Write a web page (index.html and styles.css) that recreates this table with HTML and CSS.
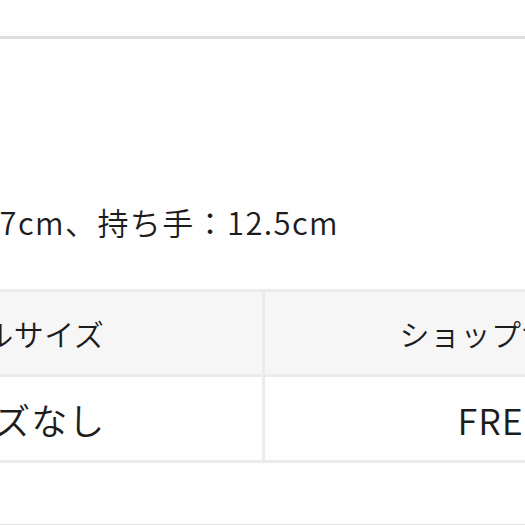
FILE: index.html
```html
<!DOCTYPE html>
<html lang="ja">
<head>
<meta charset="utf-8">
<link rel="stylesheet" href="styles.css">
</head>
<body>
<div class="page">
  <div class="rule-top"></div>
  <div class="spec"><span class="spec-text">マチ：7cm、持ち手：12.5cm</span></div>
  <div class="sheet">
    <table class="size-table">
      <tr class="head">
        <th class="col-a">モデルサイズ</th>
        <th class="col-b">ショップサイズ</th>
      </tr>
      <tr class="body">
        <td class="col-a">サイズなし</td>
        <td class="col-b">FREE</td>
      </tr>
    </table>
  </div>
  <div class="rule-bottom"></div>
</div>
</body>
</html>
```

FILE: styles.css
```css
html, body {
  margin: 0;
  padding: 0;
  background: #fefefe;
  overflow: hidden;
}
.page {
  width: 525px;
  height: 525px;
  overflow: hidden;
  font-family: "Noto Sans CJK JP", "Noto Sans", sans-serif;
  font-weight: 350;
  color: #1c1c1c;
}
.rule-top {
  margin-top: 36px;
  height: 3px;
  background: #dedede;
}
.spec {
  display: flex;
  justify-content: flex-end;
  width: 339px;
  margin-top: 163px;
  height: 40px;
  white-space: nowrap;
  font-size: 31px;
  line-height: 40px;
  letter-spacing: 1.4px;
}
.sheet {
  margin-top: 47px;
  margin-left: -224px;
  width: 974px;
}
.size-table {
  width: 100%;
  border-collapse: collapse;
  table-layout: fixed;
}
.size-table th,
.size-table td {
  border: 3px solid #ebebeb;
  text-align: center;
  font-weight: inherit;
  padding: 0;
  white-space: nowrap;
}
.size-table th {
  background: #f6f6f6;
  height: 82px;
  font-size: 30px;
  letter-spacing: 0.5px;
}
.size-table td {
  background: #fefefe;
  height: 83px;
  font-size: 36px;
  letter-spacing: 1px;
}
.size-table .col-a {
  padding-right: 14px;
}
.size-table td.col-b {
  padding-right: 8px;
}
.rule-bottom {
  margin-top: 61px;
  height: 3px;
  background: #e2e2e2;
}
```
